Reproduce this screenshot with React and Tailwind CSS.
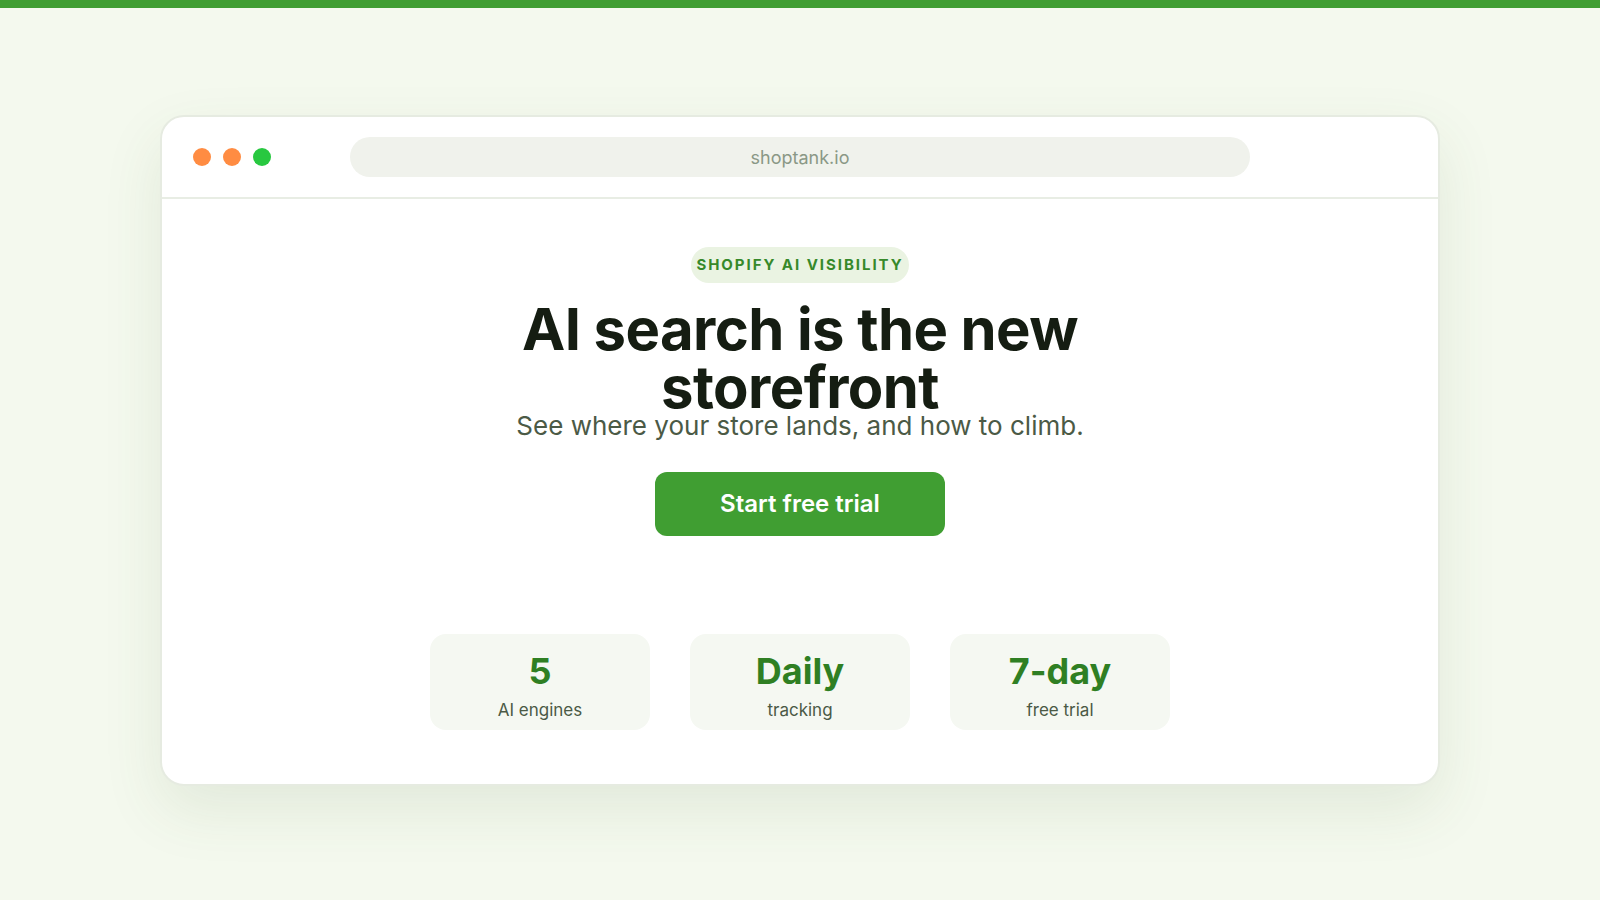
import React from "react";

const stats = [
  { value: "5", label: "AI engines" },
  { value: "Daily", label: "tracking" },
  { value: "7-day", label: "free trial" },
];

export default function App() {
  return (
    <div
      className="min-h-[900px] bg-[#f4f9ee] flex flex-col"
      style={{ fontFamily: "Inter, 'DejaVu Sans', sans-serif" }}
    >
      {/* TOP BAR */}
      <div className="h-2 bg-[#409e32]" />

      {/* WINDOW */}
      <div className="mt-[107px] mx-auto w-[1280px] h-[671px] bg-white rounded-[24px] border-2 border-[#e6ebe1] shadow-[0_24px_60px_rgba(70,100,50,0.10)] flex flex-col overflow-hidden">
        {/* CHROME */}
        <div className="h-[82px] shrink-0 border-b-2 border-[#e8ede4] flex items-center px-[31px]">
          <div className="flex items-center gap-3 w-[130px]">
            <span className="w-[18px] h-[18px] rounded-full bg-[#ff8c42]" />
            <span className="w-[18px] h-[18px] rounded-full bg-[#ff8c42]" />
            <span className="w-[18px] h-[18px] rounded-full bg-[#28c840]" />
          </div>
          <div className="ml-[27px] w-[900px] h-10 rounded-full bg-[#f0f2ec] flex items-center justify-center text-[18px] text-[#8a9886]">
            shoptank.io
          </div>
        </div>

        {/* HERO */}
        <div className="flex-1 flex flex-col items-center pt-12">
          <div className="h-9 px-[5px] rounded-full bg-[#eaf3e2] flex items-center text-[15px] font-bold tracking-[0.13em] text-[#36892a]">
            SHOPIFY AI VISIBILITY
          </div>

          <h1 className="mt-[17px] text-center text-[58px] leading-[58px] font-bold tracking-[-0.01em] text-[#151d12] w-[600px]">
            AI search is the new storefront
          </h1>

          <p className="text-[26px] leading-[20px] text-[#4b5a46]">
            See where your store lands, and how to climb.
          </p>

          <button className="mt-9 w-[290px] h-16 rounded-[12px] bg-[#409e32] text-white text-[24px] font-semibold">
            Start free trial
          </button>

          {/* STATS */}
          <div className="mt-[98px] flex gap-10">
            {stats.map((s) => (
              <div
                key={s.label}
                className="w-[220px] h-24 pt-[10px] rounded-[16px] bg-[#f5f8f2] flex flex-col items-center justify-center"
              >
                <div className="text-[36px] leading-[40px] font-bold text-[#2f7f23]">
                  {s.value}
                </div>
                <div className="mt-[7px] text-[17px] text-[#4b5a46]">{s.label}</div>
              </div>
            ))}
          </div>
        </div>
      </div>
    </div>
  );
}
